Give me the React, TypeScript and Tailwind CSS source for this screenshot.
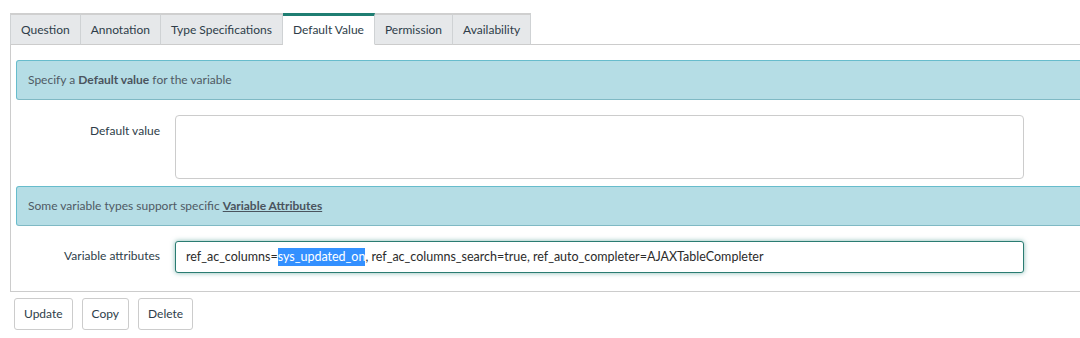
import React from 'react';

const tabs = ['Question', 'Annotation', 'Type Specifications', 'Default Value', 'Permission', 'Availability'];
const active = 'Default Value';

const font = { fontFamily: 'Lato, "Liberation Sans", sans-serif' };

const InfoBar: React.FC<{ children: React.ReactNode }> = ({ children }) => (
  <div className="h-[40px] flex items-center pl-[11px] bg-[#b5dde5] border border-[#67bccc] border-b-[#7fb9c4] rounded-l-[3px] text-[12px] text-[#4f5a64]">
    {children}
  </div>
);

const App: React.FC = () => {
  return (
    <div className="w-[1080px] h-[338px] overflow-hidden bg-white pt-[13px] pl-[10px]" style={font}>
      <div className="w-[1090px]">
        {/* tab strip */}
        <div className="flex items-end">
          {tabs.map((t) => {
            const isActive = t === active;
            return (
              <div
                key={t}
                className={
                  isActive
                    ? 'h-[32px] flex items-center px-[10px] bg-white border-t-[3px] border-t-[#1f7e72] border-r border-r-[#cfd2d4] border-b border-b-white text-[12px] text-[#2e3d49]'
                    : 'h-[32px] flex items-center px-[10px] bg-[#e6e8ea] border-t-[2px] border-t-[#cfcfcf] border-r border-r-[#cfd2d4] border-b border-b-[#cccccc] first:border-l first:border-l-[#cfd2d4] text-[12px] text-[#2e3d49]'
                }
              >
                {t}
              </div>
            );
          })}
          <div className="flex-1 border-b border-b-[#cccccc]" />
        </div>

        {/* panel */}
        <div className="border-l border-b border-[#cccccc] pl-[5px] pt-[15px] pb-[18px]">
          <InfoBar>
            <span>
              Specify a <b className="font-bold text-[#4a545e]">Default value</b> for the variable
            </span>
          </InfoBar>

          <div className="flex mt-[15px]">
            <div className="w-[145px] pr-[1px] pt-[7px] text-right text-[12px] text-[#2e3d49]">Default value</div>
            <div className="ml-[14px] w-[849px] h-[64px] border border-[#cccccc] rounded-[4px] bg-white" />
          </div>

          <div className="mt-[7px]">
            <InfoBar>
              <span>
                Some variable types support specific{' '}
                <span className="font-bold underline text-[#4a545e]">Variable Attributes</span>
              </span>
            </InfoBar>
          </div>

          <div className="flex mt-[15px] items-center">
            <div className="w-[145px] pr-[1px] text-right text-[12px] text-[#2e3d49] -mt-[3px]">Variable attributes</div>
            <div className="ml-[14px] w-[849px] h-[32px] border border-[#2a7c72] rounded-[3px] bg-white shadow-[0_0_5px_rgba(31,126,114,0.55)] flex items-center pl-[10px] text-[12.5px] text-[#2b2b2b] whitespace-nowrap overflow-hidden">
              ref_ac_columns=<span className="bg-[#3390ff] text-white">sys_updated_on</span>, ref_ac_columns_search=true, ref_auto_completer=AJAXTableCompleter
            </div>
          </div>
        </div>

        {/* buttons */}
        <div className="flex gap-[9px] mt-[6px] ml-[4px]">
          {['Update', 'Copy', 'Delete'].map((b) => (
            <button
              key={b}
              className="h-[32px] px-[9px] border border-[#cccccc] rounded-[3px] bg-white text-[12px] text-[#2e3d49]"
            >
              {b}
            </button>
          ))}
        </div>
      </div>
    </div>
  );
};

export default App;
